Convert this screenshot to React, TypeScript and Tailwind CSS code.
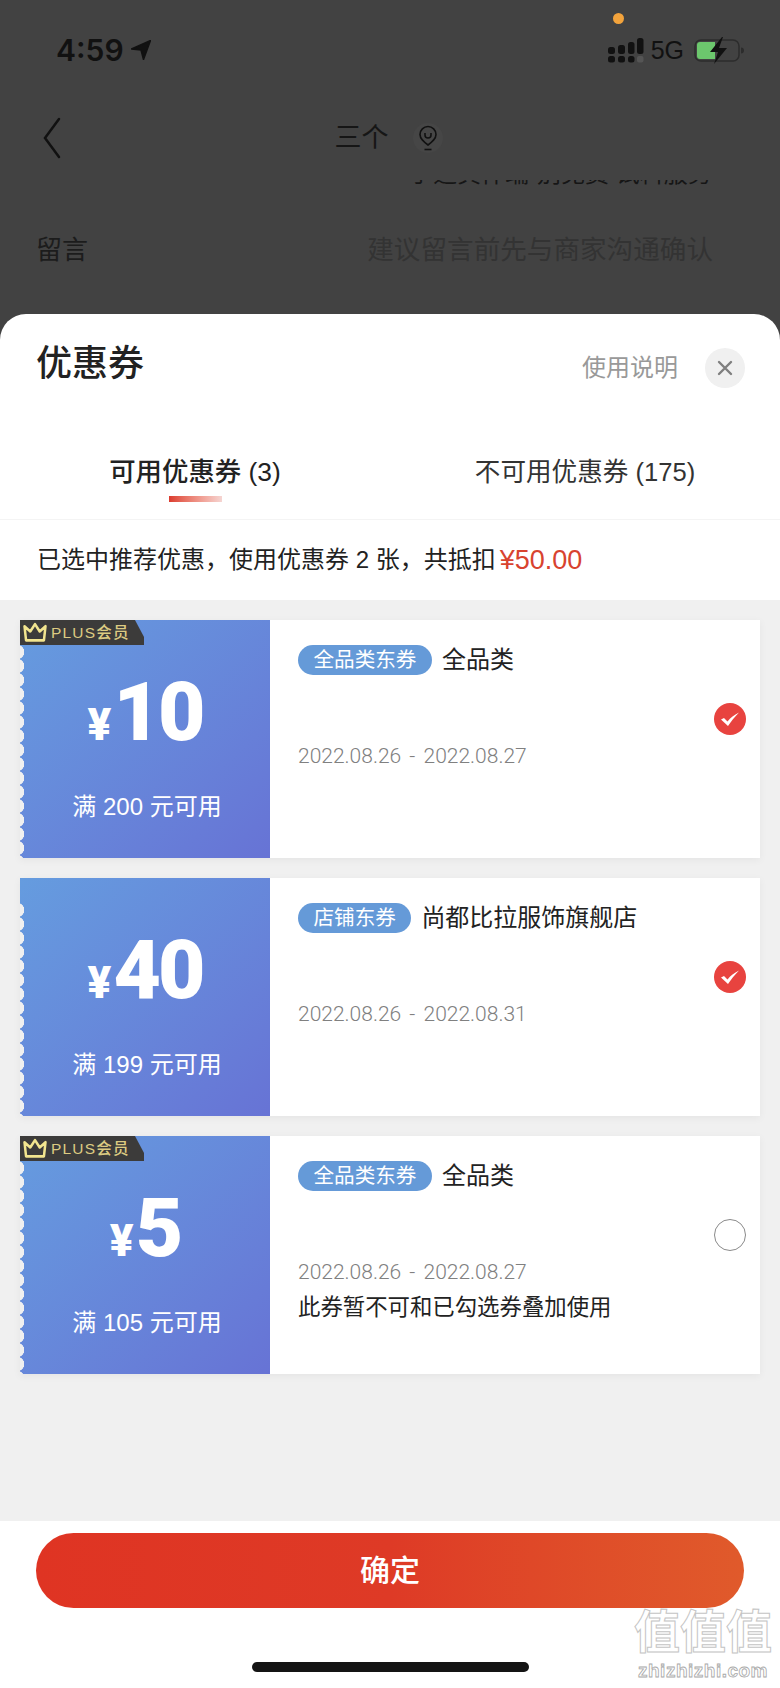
import React from "react";

type Coupon = {
    plus: boolean
    amount: string
    limit: string
    tag: string
    scope: string
    date: string
    note?: string
    checked: boolean
}

const coupons: Coupon[] = [
    {plus: true, amount: "10", limit: "满 200 元可用", tag: "全品类东券", scope: "全品类", date: "2022.08.26 - 2022.08.27", checked: true},
    {plus: false, amount: "40", limit: "满 199 元可用", tag: "店铺东券", scope: "尚都比拉服饰旗舰店", date: "2022.08.26 - 2022.08.31", checked: true},
    {plus: true, amount: "5", limit: "满 105 元可用", tag: "全品类东券", scope: "全品类", date: "2022.08.26 - 2022.08.27", note: "此券暂不可和已勾选券叠加使用", checked: false},
]

function StatusBar() {
    return <div className="relative flex h-[100px] items-center justify-between pl-[56px] pr-[36px] text-[#111]">
        <div className="flex items-center gap-[7px]">
            <span className="[font-family:Inter,sans-serif] text-[30px] font-semibold leading-none">4:59</span>
            <svg width="20" height="20" viewBox="0 0 20 20"><path d="M0.500 9 19.500 0.500 12.500 19.500 10 10Z" fill="#111" stroke="#111" strokeWidth="1.500" strokeLinejoin="round"/></svg>
        </div>
        <span className="absolute left-[613px] top-[13px] h-[11px] w-[11px] rounded-full bg-[#f2a33c]"/>
        <div className="flex items-center">
            <svg width="36" height="26" viewBox="0 0 36 26" className="mr-[7px]">
                <g fill="#111">
                    <rect x="0" y="10" width="7" height="7" rx="2.500"/>
                    <rect x="0" y="19" width="7" height="6.500" rx="2.500"/>
                    <rect x="10" y="8" width="7" height="9" rx="2.500"/>
                    <rect x="10" y="19" width="7" height="6.500" rx="2.500"/>
                    <rect x="20" y="5" width="6.500" height="12" rx="2.500"/>
                    <rect x="20" y="19" width="6.500" height="6.500" rx="2.500"/>
                    <rect x="29" y="1" width="6.500" height="16" rx="2.500"/>
                    <rect x="29" y="19" width="6.500" height="6.500" rx="2" fill="#555"/>
                </g>
            </svg>
            <span className="mr-[10px] [font-family:'Liberation_Sans',sans-serif] text-[25px] leading-none">5G</span>
            <svg width="50" height="28" viewBox="0 0 50 28">
                <rect x="1" y="4" width="44" height="21" rx="6" fill="none" stroke="#2c2c2c" strokeWidth="1.500"/>
                <path d="M3 9a3 3 0 0 1 3-3h15v17H6a3 3 0 0 1-3-3Z" fill="#6cc76d"/>
                <path d="M28 1 16 16h8l-4 12 13-16h-8l4-11Z" fill="#111"/>
                <path d="M47 11.500a3 3 0 0 1 0 6Z" fill="#2c2c2c"/>
            </svg>
        </div>
    </div>
}

function Backdrop() {
    return <div className="h-[314px] shrink-0 bg-[#424242]">
        <StatusBar/>
        <div className="relative flex h-[76px] items-center justify-center text-[#161616]">
            <svg width="20" height="42" viewBox="0 0 20 42" className="absolute left-[42px] top-[17px]">
                <path d="M17 2 3 21l14 19" fill="none" stroke="#111" strokeWidth="2.500" strokeLinecap="round"/>
            </svg>
            <span className="ml-[-3px] text-[27px] leading-none">三个</span>
            <span className="ml-[24px] flex h-[30px] w-[30px] items-center justify-center rounded-full bg-[#464646]">
                <svg width="22" height="26" viewBox="0 0 22 26" fill="none" stroke="#111" strokeWidth="1.600">
                    <path d="M11 20c-4-3-8-6-8-10.500a8 8 0 0 1 16 0C19 14 15 17 11 20Z"/>
                    <path d="M8 8v2a3 3 0 0 0 6 0V8"/>
                    <path d="M7.500 24.500h7"/>
                </svg>
            </span>
        </div>
        <div className="mt-[4px] h-[7px] overflow-hidden pl-[409px] text-[#161616]">
            <p className="mt-[-21px] whitespace-nowrap text-[24px] leading-[30px]">手选真件端·别免费 试料服务</p>
        </div>
        <div className="flex h-[127px] items-center justify-between pl-[36px] pr-[67px]">
            <span className="text-[26px] text-[#1c1c1c]">留言</span>
            <span className="text-[26.600px] text-[#333]">建议留言前先与商家沟通确认</span>
        </div>
    </div>
}

function CheckMark({checked}: { checked: boolean }) {
    if (!checked) {
        return <span className="h-[32px] w-[32px] rounded-full border border-[#8a8a8a] bg-white"/>
    }
    return <span className="flex h-[32px] w-[32px] items-center justify-center rounded-full bg-[#e8433f]">
        <svg width="20" height="16" viewBox="0 0 20 16">
            <path d="M1 8.500 4 7l3.500 3.500C10.500 6.500 14 4 19 1.500 14.500 6 11 10.500 8 15Z" fill="#fff"/>
        </svg>
    </span>
}

function PlusTag() {
    return <div
        className="absolute left-0 top-0 z-10 flex h-[25px] w-[124px] items-center bg-[#3c3b3a] pl-[2px] [clip-path:polygon(0_0,115px_0,124px_17px,124px_25px,0_25px)]">
        <svg width="26" height="21" viewBox="0 0 24 20" fill="none" stroke="#f2e58f" strokeWidth="2.400" strokeLinejoin="round">
            <path d="M2 4l5.500 5L12 2l4.500 7L22 4l-1.500 13.500h-17Z"/>
        </svg>
        <span className="ml-[3px] text-[15.500px] font-medium leading-none tracking-[1.200px] text-[#dccb82]">PLUS会员</span>
    </div>
}

function CouponCard({coupon}: { coupon: Coupon }) {
    return <div className="flex h-[238px] bg-white shadow-[0_2px_8px_rgba(0,0,0,0.05)]">
        <div
            className="relative flex w-[250px] shrink-0 flex-col items-center bg-gradient-to-br from-[#659cdf] to-[#6773d5] pt-[47px] text-white">
            {coupon.plus && <PlusTag/>}
            <span
                className="absolute bottom-0 left-0 top-[25px] w-[5px] bg-[radial-gradient(circle_at_-3px_50%,#f0f0f0_7px,transparent_7.500px)] bg-[length:5px_14px]"/>
            <div className="flex h-[90px] items-baseline justify-center [font-family:Roboto,sans-serif] font-black">
                <span className="mr-[2px] text-[44px] leading-none">¥</span>
                <span className="text-[82px] leading-[90px] tracking-[-3px]">{coupon.amount}</span>
            </div>
            <p className="ml-[4px] mt-[33px] text-[24px] leading-[34px]">{coupon.limit}</p>
        </div>
        <div className="flex min-w-0 flex-1 items-start justify-between pl-[28px] pr-[14px]">
            <div>
                <div className="mt-[25px] flex items-center">
                    <span className="flex h-[30px] items-center rounded-full bg-[#659ad8] px-[15.500px] text-[20.600px] leading-none text-white">{coupon.tag}</span>
                    <span className="ml-[10px] text-[24px] leading-[30px] text-[#222]">{coupon.scope}</span>
                </div>
                <p className="mt-[67px] [font-family:Roboto,sans-serif] text-[21px] font-light leading-[28px] text-[#808080] [word-spacing:3px]">{coupon.date}</p>
                {coupon.note && <p className="mt-[7px] text-[22.400px] leading-[30px] text-[#222]">{coupon.note}</p>}
            </div>
            <div className="mt-[83px] flex">
                <CheckMark checked={coupon.checked}/>
            </div>
        </div>
    </div>
}

function Sheet() {
    return <div className="flex min-h-0 flex-1 flex-col overflow-hidden rounded-t-[26px] bg-white">
        <div className="flex h-[100px] shrink-0 items-center justify-between pl-[36px] pr-[35px]">
            <h1 className="text-[36px] font-medium leading-none text-[#222]">优惠券</h1>
            <div className="mt-[8px] flex items-center gap-[27px]">
                <span className="text-[24px] leading-none text-[#999]">使用说明</span>
                <span className="flex h-[40px] w-[40px] items-center justify-center rounded-full bg-[#f0f0f0]">
                    <svg width="16" height="16" viewBox="0 0 16 16"><path d="M2 2l12 12M14 2 2 14" stroke="#7f7f7f" strokeWidth="2.400" strokeLinecap="round"/></svg>
                </span>
            </div>
        </div>
        <div className="grid h-[106px] shrink-0 grid-cols-2 border-b border-[#f4f4f4]">
            <div className="flex flex-col items-center pt-[43px]">
                <span className="text-[26.400px] font-medium leading-[30px] text-[#222]">可用优惠券 (3)</span>
                <span className="mt-[9px] h-[6px] w-[53px] bg-gradient-to-r from-[#db3a2e] to-[#f5d5d2]"/>
            </div>
            <div className="flex flex-col items-center pt-[43px]">
                <span className="text-[25.600px] leading-[30px] text-[#333]">不可用优惠券 (175)</span>
            </div>
        </div>
        <div className="flex h-[80px] shrink-0 items-center pl-[37px] text-[24px] text-[#222]">
            已选中推荐优惠，使用优惠券 2 张，共抵扣<span className="ml-[4px] text-[27px] text-[#d8432f]">¥50.00</span>
        </div>
        <div className="flex flex-1 flex-col gap-[20px] bg-[#f0f0f0] px-[20px] pt-[20px]">
            {coupons.map(coupon => <CouponCard coupon={coupon} key={coupon.amount}/>)}
        </div>
        <div className="relative flex h-[167px] shrink-0 flex-col items-center pt-[12px]">
            <button className="h-[75px] w-[708px] rounded-full bg-gradient-to-r from-[#df3423] via-[#de3a26] to-[#e05a2b] text-[30px] font-medium text-white">确定</button>
            <span className="mt-[54px] h-[10px] w-[277px] rounded-full bg-[#141414]"/>
            <div className="absolute right-[8px] top-[86px] flex flex-col items-center">
                <span className="text-[46px] font-bold leading-[50px] text-white [-webkit-text-stroke:1px_#c4c4c4]">值值值</span>
                <span className="mt-[3px] text-[19px] font-semibold leading-[22px] tracking-[0.500px] text-white [-webkit-text-stroke:0.800px_#a8a8a8]">zhizhizhi.com</span>
            </div>
        </div>
    </div>
}

export default function App() {
    return <div className="flex h-[1688px] w-[780px] flex-col overflow-hidden bg-[#424242] [font-family:'Liberation_Sans','Noto_Sans_CJK_SC',sans-serif]">
        <Backdrop/>
        <Sheet/>
    </div>
}
